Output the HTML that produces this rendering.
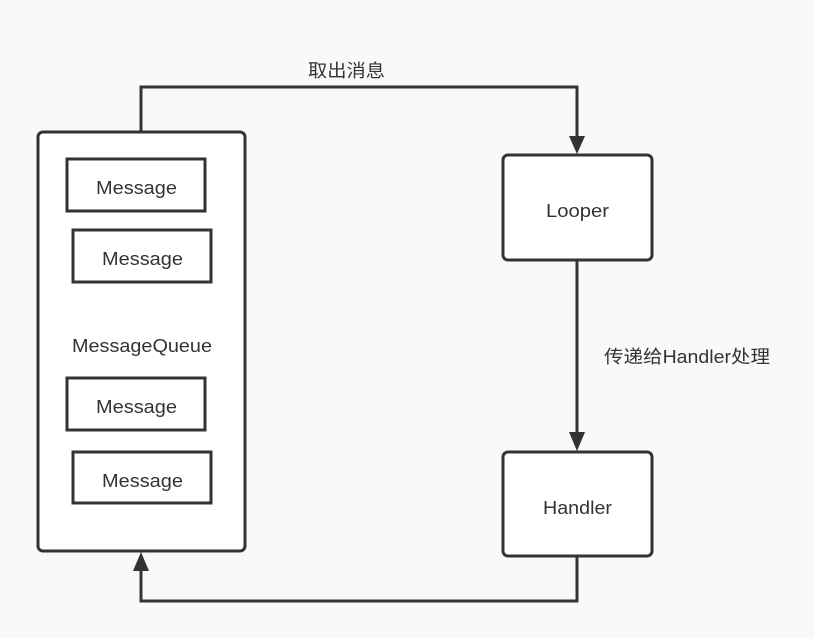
<!DOCTYPE html><html><head><style>body{margin:0;background:#f9f9f9}svg{display:block}text{font-family:"Liberation Sans","Noto Sans CJK SC",sans-serif;font-size:18px;fill:#333}</style></head><body>
<svg width="814" height="638" viewBox="0 0 814 638">
<rect width="814" height="638" fill="#f9f9f9"/>
<g stroke="#333" stroke-width="3" fill="none">
<polyline points="141,131 141,87 577,87 577,140"/>
<line x1="577" y1="260" x2="577" y2="436"/>
<polyline points="577,556 577,601 141,601 141,566"/>
</g>
<g fill="#333">
<polygon points="569,136 585,136 577,154"/>
<polygon points="569,432 585,432 577,451"/>
<polygon points="133,571 149,571 141,552"/>
</g>
<g stroke="#333" stroke-width="3" fill="#fff">
<rect x="38" y="132" width="207" height="419" rx="5"/>
<rect x="503" y="155" width="149" height="105" rx="5"/>
<rect x="503" y="452" width="149" height="104" rx="5"/>
<rect x="67" y="159" width="138" height="52"/>
<rect x="73" y="230" width="138" height="52"/>
<rect x="67" y="378" width="138" height="52"/>
<rect x="73" y="452" width="138" height="51"/>
</g>
<g>
<text x="96" y="194" textLength="81" lengthAdjust="spacingAndGlyphs">Message</text>
<text x="102" y="265" textLength="81" lengthAdjust="spacingAndGlyphs">Message</text>
<text x="72" y="352" textLength="140" lengthAdjust="spacingAndGlyphs">MessageQueue</text>
<text x="96" y="413" textLength="81" lengthAdjust="spacingAndGlyphs">Message</text>
<text x="102" y="487" textLength="81" lengthAdjust="spacingAndGlyphs">Message</text>
<text x="546" y="217" textLength="63" lengthAdjust="spacingAndGlyphs">Looper</text>
<text x="543" y="514" textLength="69" lengthAdjust="spacingAndGlyphs">Handler</text>
<text x="308" y="77" textLength="77" lengthAdjust="spacingAndGlyphs">取出消息</text>
<text x="604" y="363" textLength="166" lengthAdjust="spacingAndGlyphs">传递给Handler处理</text>
</g>
</svg></body></html>
